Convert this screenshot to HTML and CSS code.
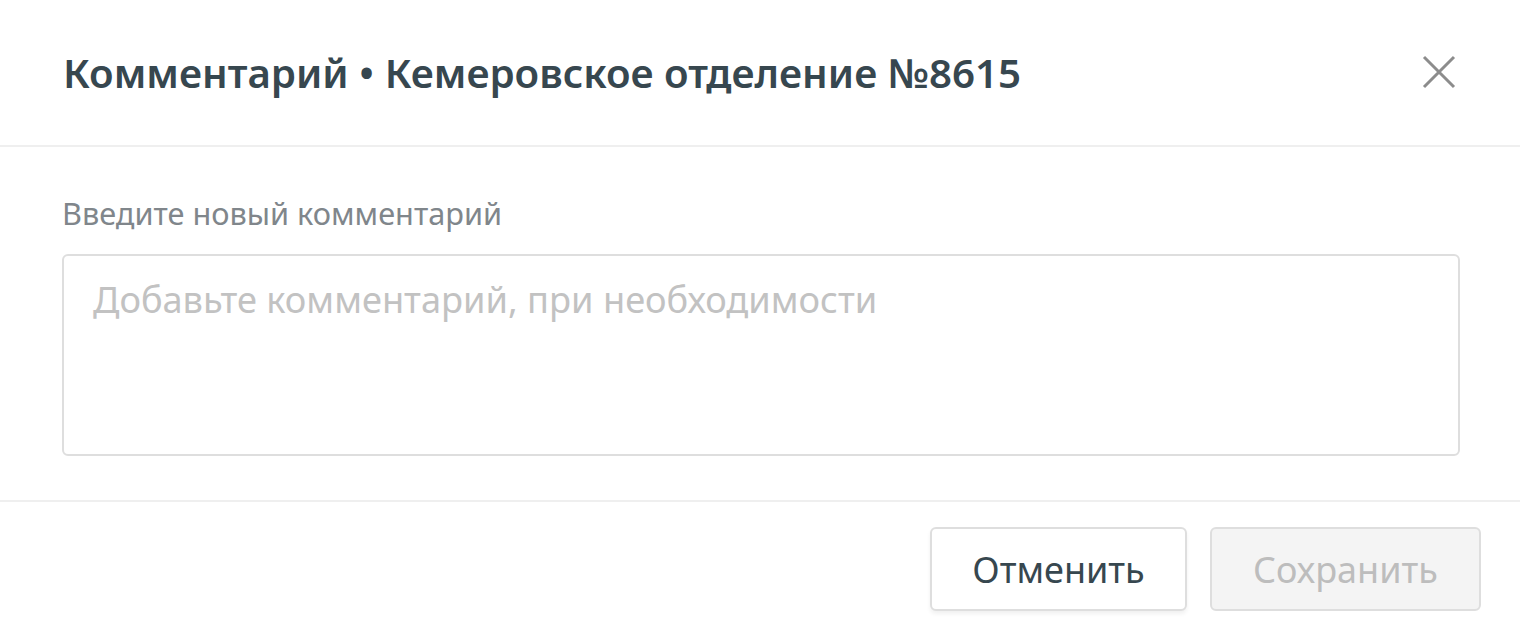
FILE: index.html
```html
<!DOCTYPE html>
<html lang="ru">
<head>
<meta charset="utf-8">
<title>Комментарий</title>
<link rel="stylesheet" href="styles.css">
</head>
<body>
<div class="modal">
  <header class="modal-header">
    <h1 class="modal-title">Комментарий • Кемеровское отделение №8615</h1>
    <button class="close" aria-label="Закрыть">
      <svg width="34" height="34" viewBox="0 0 34 34"><path d="M2 2 L32 32 M32 2 L2 32" stroke="#8c8c8c" stroke-width="3" fill="none"/></svg>
    </button>
  </header>
  <section class="modal-body">
    <label class="field-label" for="c">Введите новый комментарий</label>
    <textarea id="c" class="field" placeholder="Добавьте комментарий, при необходимости"></textarea>
  </section>
  <footer class="modal-footer">
    <button class="btn btn-cancel">Отменить</button>
    <button class="btn btn-save" disabled>Сохранить</button>
  </footer>
</div>
</body>
</html>
```
FILE: styles.css
```css
html, body {
  margin: 0;
  padding: 0;
  background: #fff;
}
body {
  font-family: "Noto Sans", "Open Sans", sans-serif;
}
.modal {
  width: 1520px;
  height: 632px;
  display: flex;
  flex-direction: column;
}
.modal-header {
  height: 147px;
  flex: none;
  box-sizing: border-box;
  border-bottom: 2px solid #efefef;
  display: flex;
  align-items: center;
  justify-content: space-between;
  padding: 0 64px 0 63px;
}
.modal-title {
  margin: 0;
  font-size: 40.25px;
  font-weight: 600;
  color: #37474f;
  letter-spacing: 0;
}
.close {
  border: 0;
  background: none;
  padding: 0;
  width: 34px;
  height: 34px;
  display: flex;
  margin-bottom: 1px;
}
.modal-body {
  padding: 46px 60px 0 62px;
  display: flex;
  flex-direction: column;
  height: 355px;
  flex: none;
  box-sizing: border-box;
  border-bottom: 2px solid #efefef;
}
.field-label {
  font-size: 30.7px;
  line-height: 40px;
  color: #80868b;
  margin-bottom: 21px;
}
.field {
  width: 1398px;
  height: 202px;
  box-sizing: border-box;
  border: 2px solid #dedede;
  border-radius: 6px;
  padding: 18px 29px;
  font-family: inherit;
  font-size: 36.2px;
  resize: none;
  outline: none;
}
.field::placeholder {
  color: #c2c2c2;
}
.modal-footer {
  display: flex;
  justify-content: flex-end;
  gap: 23px;
  padding: 25px 39px 0 0;
}
.btn {
  height: 84px;
  box-sizing: border-box;
  border: 2px solid #dedede;
  border-radius: 6px;
  font-family: inherit;
  font-size: 36px;
  padding: 0;
}
.btn-cancel {
  width: 257px;
  background: #fff;
  color: #37474f;
  box-shadow: 0 3px 4px rgba(0,0,0,0.06);
}
.btn-save {
  width: 271px;
  background: #f4f4f4;
  color: #bdbdbd;
}
```
